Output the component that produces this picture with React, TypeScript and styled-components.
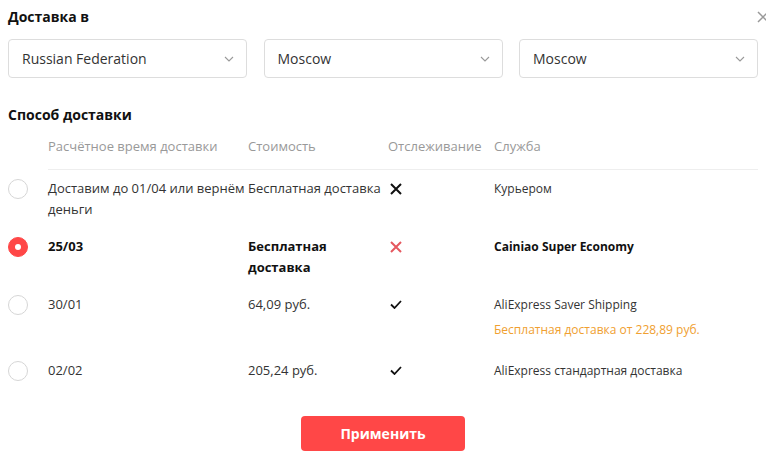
import React from 'react';
import styled, { createGlobalStyle } from 'styled-components';

const GlobalStyle = createGlobalStyle`
  body {
    margin: 0;
    background: #fff;
    font-family: 'Open Sans', 'Noto Sans', sans-serif;
    color: #333;
  }
`;

const Modal = styled.div`
  position: relative;
  width: 766px;
  height: 454px;
  box-sizing: border-box;
  padding: 6px 8px 0 8px;
  overflow: hidden;
`;

const Title = styled.div`
  font-size: 14px;
  font-weight: 700;
  line-height: 21px;
  color: #111;
`;

const CloseButton = styled.div`
  position: absolute;
  top: 6px;
  right: -3px;
  width: 12px;
  height: 12px;
`;

const Selects = styled.div`
  display: grid;
  grid-template-columns: repeat(3, 239px);
  column-gap: 16.5px;
  margin-top: 12px;
`;

const SelectBox = styled.div`
  height: 39px;
  box-sizing: border-box;
  border: 1px solid #ddd;
  border-radius: 4px;
  display: flex;
  align-items: center;
  justify-content: space-between;
  padding: 0 12px 0 13px;
  font-size: 14px;
  color: #333;
`;

const SectionTitle = styled(Title)`
  margin-top: 26px;
`;

const Table = styled.div`
  display: grid;
  grid-template-columns: 40px 200px 140px 106px 1fr;
  font-size: 13px;
  line-height: 21px;
`;

const HeadCell = styled.div<{ $blank?: boolean }>`
  color: #999;
  padding: 11px 0 12px;
  border-bottom: 1px solid ${(p) => (p.$blank ? 'transparent' : '#eee')};
`;

const Cell = styled.div<{ $bold?: boolean; $small?: boolean }>`
  padding: 8px 0;
  font-size: ${(p) => (p.$small ? '12px' : '13px')};
  font-weight: ${(p) => (p.$bold ? 700 : 400)};
  color: ${(p) => (p.$bold ? '#111' : '#333')};
  display: flex;
  flex-direction: column;
`;

const RadioCell = styled.div`
  padding: 8px 0;
`;

const Radio = styled.div<{ $checked?: boolean }>`
  width: 20px;
  height: 20px;
  margin-top: 0.5px;
  box-sizing: border-box;
  border-radius: 50%;
  border: 1px solid ${(p) => (p.$checked ? '#ff4747' : '#d6d6d6')};
  background: ${(p) => (p.$checked ? '#ff4747' : '#fff')};
  display: flex;
  align-items: center;
  justify-content: center;
  &::after {
    content: '';
    display: ${(p) => (p.$checked ? 'block' : 'none')};
    width: 6px;
    height: 6px;
    border-radius: 50%;
    background: #fff;
  }
`;

const IconCell = styled.div`
  padding: 8px 0 8px 2px;
  height: 21px;
  display: flex;
  align-items: center;
`;

const Note = styled.div`
  color: #f0a030;
  font-size: 12px;
  margin: 4px 0 4px;
`;

const Footer = styled.div`
  display: flex;
  justify-content: center;
  margin-top: 27px;
`;

const ApplyButton = styled.button`
  width: 164px;
  height: 35px;
  border: none;
  border-radius: 4px;
  background: #ff4747;
  color: #fff;
  font-family: 'Open Sans', sans-serif;
  font-size: 14px;
  font-weight: 700;
  cursor: pointer;
`;

const Chevron = () => (
  <svg width="10" height="6" viewBox="0 0 10 6" fill="none">
    <path d="M1 1l4 4 4-4" stroke="#999" strokeWidth="1.1" />
  </svg>
);

const Cross = ({ color }: { color: string }) => (
  <svg width="12" height="12" viewBox="0 0 12 12" fill="none">
    <path d="M1 1l10 10M11 1L1 11" stroke={color} strokeWidth="2" />
  </svg>
);

const Check = () => (
  <svg width="12" height="9" viewBox="0 0 12 9" fill="none">
    <path d="M1 4.5l3.5 3.5L11 1" stroke="#111" strokeWidth="1.8" />
  </svg>
);

interface Option {
  date: string;
  price: string;
  tracking: 'none' | 'noneRed' | 'yes';
  service: string;
  note?: string;
  checked?: boolean;
}

const options: Option[] = [
  { date: 'Доставим до 01/04 или вернём деньги', price: 'Бесплатная доставка', tracking: 'none', service: 'Курьером' },
  { date: '25/03', price: 'Бесплатная доставка', tracking: 'noneRed', service: 'Cainiao Super Economy', checked: true },
  { date: '30/01', price: '64,09 руб.', tracking: 'yes', service: 'AliExpress Saver Shipping', note: 'Бесплатная доставка от 228,89 руб.' },
  { date: '02/02', price: '205,24 руб.', tracking: 'yes', service: 'AliExpress стандартная доставка' },
];

const App: React.FC = () => {
  return (
    <>
      <GlobalStyle />
      <Modal>
        <Title>Доставка в</Title>
        <CloseButton>
          <svg width="12" height="12" viewBox="0 0 12 12" fill="none">
            <path d="M1 1l10 10M11 1L1 11" stroke="#999" strokeWidth="1.5" />
          </svg>
        </CloseButton>
        <Selects>
          <SelectBox>Russian Federation<Chevron /></SelectBox>
          <SelectBox>Moscow<Chevron /></SelectBox>
          <SelectBox>Moscow<Chevron /></SelectBox>
        </Selects>

        <SectionTitle>Способ доставки</SectionTitle>
        <Table>
          <HeadCell $blank />
          <HeadCell>Расчётное время доставки</HeadCell>
          <HeadCell>Стоимость</HeadCell>
          <HeadCell>Отслеживание</HeadCell>
          <HeadCell>Служба</HeadCell>
          {options.map((o) => (
            <React.Fragment key={o.date}>
              <RadioCell>
                <Radio $checked={o.checked} />
              </RadioCell>
              <Cell $bold={o.checked}>{o.date}</Cell>
              <Cell $bold={o.checked}>{o.price}</Cell>
              <IconCell>
                {o.tracking === 'yes' ? (
                  <Check />
                ) : (
                  <Cross color={o.tracking === 'noneRed' ? '#e5585f' : '#111'} />
                )}
              </IconCell>
              <Cell $bold={o.checked} $small>
                <span>{o.service}</span>
                {o.note && <Note>{o.note}</Note>}
              </Cell>
            </React.Fragment>
          ))}
        </Table>
        <Footer>
          <ApplyButton>Применить</ApplyButton>
        </Footer>
      </Modal>
    </>
  );
};

export default App;
